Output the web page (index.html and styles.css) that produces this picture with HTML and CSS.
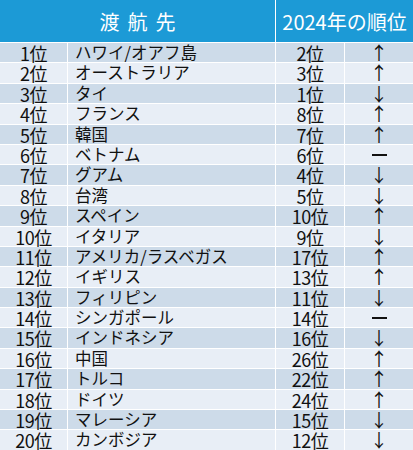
FILE: index.html
```html
<!DOCTYPE html>
<html lang="ja">
<head>
  <meta charset="UTF-8" />
  <title>渡航先ランキング</title>
  <link rel="stylesheet" href="styles.css">
</head>
<body>
  <div class="ranking">
    <div class="head head-main">渡航先</div>
    <div class="head head-prev">2024年の順位</div>

    <div class="cell rank">1位</div><div class="cell name">ハワイ/オアフ島</div><div class="cell prev">2位</div><div class="cell trend">↑</div>
    <div class="cell rank">2位</div><div class="cell name">オーストラリア</div><div class="cell prev">3位</div><div class="cell trend">↑</div>
    <div class="cell rank">3位</div><div class="cell name">タイ</div><div class="cell prev">1位</div><div class="cell trend">↓</div>
    <div class="cell rank">4位</div><div class="cell name">フランス</div><div class="cell prev">8位</div><div class="cell trend">↑</div>
    <div class="cell rank">5位</div><div class="cell name">韓国</div><div class="cell prev">7位</div><div class="cell trend">↑</div>
    <div class="cell rank">6位</div><div class="cell name">ベトナム</div><div class="cell prev">6位</div><div class="cell trend"><span class="flat"></span></div>
    <div class="cell rank">7位</div><div class="cell name">グアム</div><div class="cell prev">4位</div><div class="cell trend">↓</div>
    <div class="cell rank">8位</div><div class="cell name">台湾</div><div class="cell prev">5位</div><div class="cell trend">↓</div>
    <div class="cell rank">9位</div><div class="cell name">スペイン</div><div class="cell prev">10位</div><div class="cell trend">↑</div>
    <div class="cell rank">10位</div><div class="cell name">イタリア</div><div class="cell prev">9位</div><div class="cell trend">↓</div>
    <div class="cell rank">11位</div><div class="cell name">アメリカ/ラスベガス</div><div class="cell prev">17位</div><div class="cell trend">↑</div>
    <div class="cell rank">12位</div><div class="cell name">イギリス</div><div class="cell prev">13位</div><div class="cell trend">↑</div>
    <div class="cell rank">13位</div><div class="cell name">フィリピン</div><div class="cell prev">11位</div><div class="cell trend">↓</div>
    <div class="cell rank">14位</div><div class="cell name">シンガポール</div><div class="cell prev">14位</div><div class="cell trend"><span class="flat"></span></div>
    <div class="cell rank">15位</div><div class="cell name">インドネシア</div><div class="cell prev">16位</div><div class="cell trend">↓</div>
    <div class="cell rank">16位</div><div class="cell name">中国</div><div class="cell prev">26位</div><div class="cell trend">↑</div>
    <div class="cell rank">17位</div><div class="cell name">トルコ</div><div class="cell prev">22位</div><div class="cell trend">↑</div>
    <div class="cell rank">18位</div><div class="cell name">ドイツ</div><div class="cell prev">24位</div><div class="cell trend">↑</div>
    <div class="cell rank">19位</div><div class="cell name">マレーシア</div><div class="cell prev">15位</div><div class="cell trend">↓</div>
    <div class="cell rank">20位</div><div class="cell name">カンボジア</div><div class="cell prev">12位</div><div class="cell trend">↓</div>
  </div>
</body>
</html>
```

FILE: styles.css
```css
body {
  margin: 0;
  background: #ffffff;
  font-family: "Noto Sans CJK JP", "Noto Sans", sans-serif;
  color: #111111;
  overflow: hidden;
}

.ranking {
  display: grid;
  grid-template-columns: 67px 207px 68px 68px;
  grid-template-rows: 42px;
  grid-auto-rows: 19.4px;
  gap: 1px;
  width: 413px;
  background: #ffffff;
}

.head {
  background: #1c9ad6;
  color: #ffffff;
  font-size: 20px;
  display: flex;
  align-items: center;
  justify-content: center;
}

.head-main {
  grid-column: span 2;
  letter-spacing: 8px;
  padding-left: 8px;
}

.head-prev {
  grid-column: span 2;
}

.cell {
  font-size: 16px;
  line-height: 19.4px;
  white-space: nowrap;
  background: #cddbe9;
}

/* alternate rows: 4 cells per row, header takes the first 2 children */
.cell:nth-child(8n+7),
.cell:nth-child(8n+8),
.cell:nth-child(8n+9),
.cell:nth-child(8n+10) {
  background: #e8eef6;
}

.rank,
.prev,
.trend {
  text-align: center;
  font-size: 18px;
}

.rank,
.prev {
  letter-spacing: -0.5px;
  padding-top: 1px;
  line-height: 18.4px;
}

.name {
  padding-left: 7px;
  font-size: 16.5px;
}

.trend {
  display: flex;
  align-items: center;
  justify-content: center;
}

.flat {
  display: block;
  width: 15px;
  height: 2px;
  background: #111111;
}
```
